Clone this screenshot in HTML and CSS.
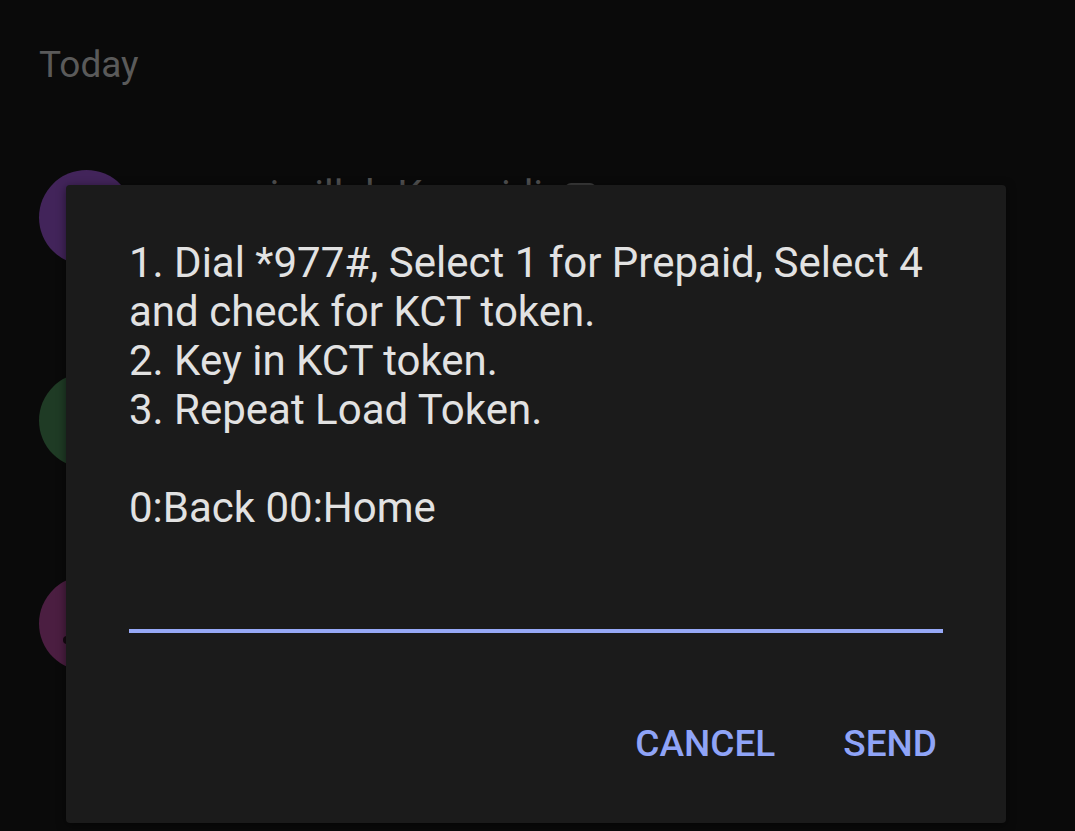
FILE: index.html
```html
<!DOCTYPE html>
<html lang="en">
<head>
<meta charset="utf-8">
<title>USSD</title>
<link rel="stylesheet" href="styles.css">
</head>
<body>
<div class="screen">
  <div class="section-title">Today</div>
  <ul class="threads">
    <li class="thread">
      <span class="avatar purple"></span>
      <div class="thread-body"><span class="name">suwaimillah Kamaidi</span><span class="sim"></span></div>
    </li>
    <li class="thread">
      <span class="avatar green"></span>
    </li>
    <li class="thread">
      <span class="avatar pink"><span class="glyph"></span></span>
    </li>
  </ul>

  <div class="dialog" role="dialog">
    <p class="message">1. Dial *977#, Select 1 for Prepaid, Select 4<br>and check for KCT token.<br>2. Key in KCT token.<br>3. Repeat Load Token.<br><br>0:Back 00:Home</p>
    <input class="reply" type="text" aria-label="Reply">
    <div class="actions">
      <button class="action" type="button">CANCEL</button>
      <button class="action" type="button">SEND</button>
    </div>
  </div>
</div>
</body>
</html>
```
FILE: styles.css
```css
html, body {
  margin: 0;
  padding: 0;
  background: #0a0a0a;
}

body {
  width: 1075px;
  height: 831px;
  overflow: hidden;
  font-family: Roboto, "Liberation Sans", sans-serif;
}

.screen {
  position: relative;
  width: 1075px;
  height: 831px;
}

.section-title {
  padding: 43px 0 0 39px;
  font-size: 37px;
  line-height: 44px;
  color: #5a5a5a;
}

.threads {
  list-style: none;
  margin: 83px 0 0 0;
  padding: 0;
}

.thread {
  display: flex;
  align-items: flex-start;
  gap: 41px;
  height: 203px;
  padding-left: 39px;
}

.avatar {
  position: relative;
  flex: none;
  width: 95px;
  height: 95px;
  border-radius: 50%;
}

.avatar.purple { background: #42245a; }
.avatar.green { background: #1f3b25; }
.avatar.pink { background: #4b1e41; }

.glyph {
  position: absolute;
  left: 24px;
  top: 60px;
  width: 8px;
  height: 8px;
  border-radius: 50%;
  background: #150a12;
}

.thread-body {
  display: flex;
  align-items: center;
  gap: 22px;
  margin-top: 2px;
}

.name {
  font-size: 40px;
  line-height: 48px;
  color: #505050;
}

.sim {
  width: 31px;
  height: 31px;
  border-radius: 6px;
  background: #3a3a3a;
  margin-top: 4px;
}

.dialog {
  position: absolute;
  left: 66px;
  top: 185px;
  width: 940px;
  height: 638px;
  box-sizing: border-box;
  padding: 53px 63px 0;
  background: #1b1b1b;
  border-radius: 4px;
  box-shadow: 0 2px 10px rgba(0, 0, 0, 0.5);
}

.message {
  margin: 0;
  font-size: 42px;
  line-height: 49px;
  color: #e2e2e2;
  white-space: nowrap;
}

.reply {
  display: block;
  width: 100%;
  height: 101px;
  box-sizing: border-box;
  margin: 0;
  padding: 0;
  border: 0;
  border-bottom: 4px solid #97a9f7;
  background: transparent;
  outline: none;
  font: inherit;
}

.actions {
  display: flex;
  justify-content: flex-end;
  gap: 68px;
  padding: 89px 6px 0 0;
}

.action {
  margin: 0;
  padding: 0;
  border: 0;
  background: transparent;
  font-family: Roboto, "Liberation Sans", sans-serif;
  font-weight: 500;
  font-size: 37px;
  line-height: 44px;
  color: #8fa4f7;
}
```
